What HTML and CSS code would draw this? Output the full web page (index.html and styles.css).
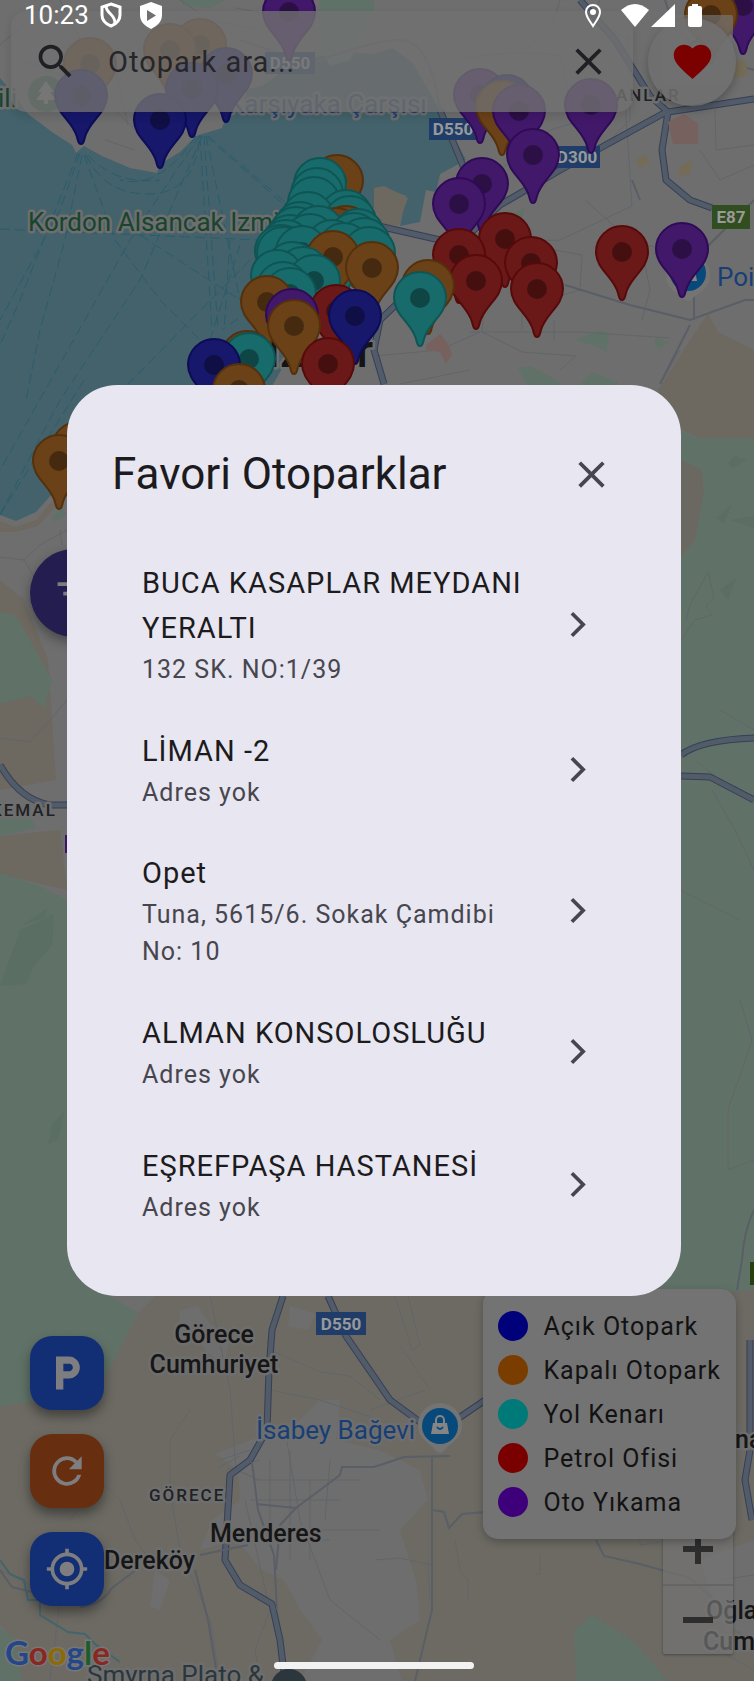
FILE: index.html
```
<!DOCTYPE html>
<html lang="tr">
<head>
<meta charset="utf-8">
<meta name="viewport" content="width=device-width, initial-scale=1">
<title>Favori Otoparklar</title>
<link rel="stylesheet" href="styles.css">
</head>
<body>
<div class="screen">
<svg class="map" viewBox="0 0 754 1681" preserveAspectRatio="xMidYMid slice" role="img" aria-label="İzmir haritası">
  <defs>
    <g id="pin"><path d="M0 48C-3 48-3 44-4 41C-8 25-26 17-26 0A26 26 0 0 1 26 0C26 17 8 25 4 41C3 44 3 48 0 48Z" stroke-width="2"/><circle r="10" stroke="none"/></g>
  </defs>
  <rect class="land" width="754" height="1681"/>
  <path class="water" d="M0 78L12 92L28 114L52 132L72 145L76 153L84 146L102 156L130 168L157 173L160 164L180 152L196 136L222 128L228 112L250 104L236 92L262 86L300 60L345 52L374 54L392 48L412 62L432 96L450 130L466 160L440 174L436 192L426 190L420 222L400 226L406 196L386 188L376 206L350 230L310 320L264 400L67 474L52 494L36 512L16 521L0 515Z"/>
  <path class="sand" d="M374 188L384 186L408 198L398 226L374 222ZM0 521L16 527L36 520L60 492L64 498L38 526L14 532L0 532ZM0 580L24 600L48 660L56 780L0 790ZM0 836L60 830L67 890L0 874ZM700 325L708 314L718 332L754 350V438H700L660 420L658 390Z"/>
  <path class="green" d="M180 0H225L210 8L185 6ZM320 0H374V14L350 60L330 66L318 44ZM574 340L600 330L610 334L606 352L596 346ZM655 338L670 342L660 348L655 346ZM518 368L530 366L560 382L556 390H530ZM580 384L592 372L618 382V390H580ZM50 518L62 506L66 514L56 522ZM0 612L16 616L30 640L52 680L44 708L30 696L0 704ZM0 800L24 806L36 828L0 836ZM0 873L40 886L67 900H100V1290L138 1313L104 1380L60 1398L0 1406ZM681 431L700 438H754V1290L660 1296H560V440ZM500 222L524 208L522 222Z"/>
  <path class="beige" d="M155 1296H660L754 1290V1681H22L14 1642L0 1624V1406L60 1398L104 1380L138 1313Z"/>
  <path class="green" d="M574 1630L592 1615L632 1640L668 1681H576ZM356 1470L368 1464L371 1470L364 1474ZM0 1628L16 1640L22 1681H0Z"/>
  <path class="land" d="M180 1310L198 1306L210 1324L230 1340L224 1364L206 1352L198 1338L178 1328ZM290 1306L316 1314L308 1330L288 1326ZM215 1454L250 1440L290 1430L320 1400L340 1400L336 1440L380 1450L420 1470L428 1500L400 1530L416 1580L420 1620L390 1640L402 1681H300L322 1640L300 1610L284 1580L262 1570L236 1540L200 1550L212 1520L240 1500L238 1470ZM155 1570L170 1580L160 1610L150 1606ZM700 1560L754 1540V1640L720 1620Z"/>
  <path class="hill" d="M681 460L702 470L704 492L695 540L681 556Z"/>
  <path class="shade" d="M20 930L54 914L52 946L34 966L26 984L0 986ZM22 925L48 908L44 918ZM734 456L748 460L732 468L728 464ZM716 518L732 504L724 524ZM730 520L754 516V528ZM720 590L736 578L728 600ZM52 1124L64 1112L58 1140L48 1144Z"/>
  <g class="ferry">
    <path d="M78 153L20 300L0 345M80 153L60 210L0 320M82 155L65 240L40 330L26 400M84 155L115 240L160 300L210 350M86 155Q105 195 150 194T200 135M88 155Q115 185 160 180M200 135L130 240L0 470M202 136L140 280L60 400L0 515M200 136L212 330M204 136L218 330M206 136L240 300M196 136Q160 190 120 180M206 136L290 210M208 136L300 215M0 229L260 240M140 235L240 300M250 260L128 384M84 380L0 515M240 245L210 340M230 240L224 330M250 310L222 330"/>
  </g>
  <g class="street">
    <path d="M0 45Q30 20 50 0M60 0L80 40L130 55L165 80M20 60L60 75L120 70M110 0L150 35L120 80M90 110L115 70L128 125M70 125L110 105L150 145M105 140L135 150M180 0L210 20L260 30M236 8L300 20M460 60Q490 50 560 55L570 100M600 0L590 20L630 40M560 0Q550 40 520 50M628 35L630 120L600 150M500 170L550 130L600 115M585 200L630 240L700 260M625 100L632 206L560 240L500 242M700 150L720 180L754 165M640 240L650 290L642 320M555 250L582 255L580 290L545 300M484 310L482 332L522 352L576 356L560 370M374 356L440 350L480 332M400 384L470 370M470 332L580 332L670 338M660 384L680 350M554 320V340M522 290V330M715 110L716 150L754 145M0 557L24 560L40 545L67 530M24 560L36 580M60 530L62 545M0 738L30 742L50 720L67 700M720 710L754 730M681 640L695 620L712 615L706 606L714 598L708 572L690 605L686 620M740 1000L752 1040L728 1110V1170L754 1160M695 760L720 780L754 800M712 790L735 830L754 870M640 870L700 900L740 920"/>
    <path d="M210 1296L230 1390L236 1470L260 1480M270 1350L320 1372L350 1376L380 1400M190 1410L170 1440V1490L180 1550L210 1620L220 1681M245 1500L270 1610L255 1650L260 1681M270 1390L320 1400L380 1420M285 1430L300 1520L330 1600L380 1640M310 1480V1560M255 1480H360M250 1500H340M270 1460V1540M290 1450V1560M330 1460L325 1520M265 1540H330M380 1530H320M220 1460L250 1450M226 1470L260 1460M218 1468L240 1456M70 1520L86 1500L100 1480L120 1500L135 1540L150 1560M0 1570L60 1600L50 1681M375 1560L400 1558L432 1565M425 1390L370 1410M430 1600L428 1560M455 1540L460 1570L468 1580V1600M540 1554V1574H536M400 1345L430 1390M640 1540V1545L660 1542M720 1580L754 1575M700 1640L754 1670M395 1296L412 1350L420 1345L408 1296"/>
  </g>
  <g class="road-casing"><path d="M580 0L615 40L650 96L668 112L662 150L666 180L690 200L712 208M668 112L754 99M374 225L440 240M666 112L560 170L500 205L380 320L374 350L384 384M440 110L475 195M0 765Q20 800 50 805H67M283 1296L272 1330L269 1370L267 1430L250 1460L230 1475L225 1560L240 1585L272 1604L280 1640L285 1681M328 1296L346 1336L390 1400L420 1422L450 1424L500 1390M681 755Q700 740 754 738M681 776L710 777L754 800M750 1340V1450L745 1480L752 1520"/></g>
  <g class="road"><path d="M580 0L615 40L650 96L668 112L662 150L666 180L690 200L712 208M668 112L754 99M374 225L440 240M666 112L560 170L500 205L380 320L374 350L384 384M440 110L475 195M0 765Q20 800 50 805H67M283 1296L272 1330L269 1370L267 1430L250 1460L230 1475L225 1560L240 1585L272 1604L280 1640L285 1681M328 1296L346 1336L390 1400L420 1422L450 1424L500 1390M681 755Q700 740 754 738M681 776L710 777L754 800M750 1340V1450L745 1480L752 1520"/></g>
  <path class="road-minor" d="M240 40L270 50L300 68Q370 40 400 40T440 110M565 285L630 305L690 320L745 300H754M694 320V260L754 200M660 384L690 325M665 0L675 30L720 60L754 70M632 180L640 200M200 1555L248 1545M195 1570L208 1620L218 1681M252 1462L258 1510L274 1555L277 1610M256 1504L296 1508L340 1475L342 1467H374L404 1457L450 1456M296 1508L280 1525L276 1570M432 1456V1510L444 1512L449 1528L462 1514L486 1512M432 1510V1610L415 1681M0 1570L12 1587L32 1592M80 1607Q100 1606 112 1588L136 1570M596 1540L604 1556L640 1564L690 1578L715 1600L754 1610"/>
  <path class="stream" d="M0 1560L10 1574L24 1580L28 1600L40 1600V1615L68 1632L85 1634L95 1644L120 1662"/>
  <path class="road-minor" d="M754 1210Q744 1230 742 1260L737 1290"/>
  <path class="clinic" d="M426 345L440 334L448 344L452 354L446 364L440 352L426 350ZM668 122L684 114L698 124V144H673Z"/>
  <path class="gold" d="M636 160L644 154L650 162L640 168ZM680 166L692 160L690 174L678 176ZM732 62L746 60L748 76L736 78Z"/>

  <g class="shield"><rect x="265" y="52" width="50" height="22"/><text x="290" y="69">D550</text></g>
  <g class="shield"><rect x="429" y="118" width="48" height="22"/><text x="453" y="135">D550</text></g>
  <g class="shield"><rect x="552" y="146" width="48" height="22"/><text x="577" y="163">D300</text></g>
  <g class="shield"><rect x="316" y="1312" width="50" height="23"/><text x="341" y="1330">D550</text></g>
  <g class="shield shield-green"><rect x="712" y="205" width="38" height="24"/><text x="731" y="223">E87</text></g>
  <rect class="edge-green" x="750" y="1262" width="4" height="23"/>
  <rect class="edge-purple" x="65" y="835" width="8" height="18"/>

  <g class="label">
    <text class="park" x="-2" y="107" font-size="26">ili</text>
    <text class="park" x="28" y="231" font-size="26">Kordon Alsancak Izmir</text>
    <text class="place" x="228" y="113" font-size="26">Karşıyaka Çarşısı</text>
    <text class="place" x="717" y="286" font-size="26">Poi</text>
    <text class="place" x="256" y="1439" font-size="26">İsabey Bağevi</text>
    <text class="district" x="616" y="101">ANLAR</text>
    <text class="district" x="-9" y="816">KEMAL</text>
    <text class="district" x="149" y="1501">GÖRECE</text>
    <text class="town" x="214" y="1343" text-anchor="middle">Görece</text>
    <text class="town" x="214" y="1373" text-anchor="middle">Cumhuriyet</text>
    <text class="town" x="210" y="1542">Menderes</text>
    <text class="town" x="104" y="1569">Dereköy</text>
    <text class="town" x="735" y="1448">na</text>
    <text class="town" x="706" y="1619">Oğla</text>
    <text class="town" x="703" y="1650">Cum</text>
    <text class="venue" x="87" y="1684" font-size="26">Smyrna Plato &amp;</text>
    <text class="city" x="320" y="367" text-anchor="middle">İzmir</text>
  </g>
  <circle class="venue-dot" cx="289" cy="1687" r="18"/>
  <g class="tree"><circle cx="46" cy="94" r="18"/><path d="M46 81L54 92H50L56 100H48V104H44V100H36L42 92H38Z"/></g>
  <g><path class="poi-rim" d="M440 1403A22 22 0 0 1 462 1425C462 1440 450 1442 444 1451Q440 1455 436 1451C430 1442 418 1440 418 1425A22 22 0 0 1 440 1403Z"/><circle class="poi" cx="440" cy="1426" r="18"/><path class="poi-icon" d="M433 1423H447L449 1434H431Z"/><path d="M436 1424V1420A4 4 0 0 1 444 1420V1424" fill="none" stroke="#858585" stroke-width="2"/><path d="M437 1427Q440 1431 443 1427" fill="none" stroke="#07497a" stroke-width="2"/></g>
  <g><path class="poi-rim" d="M688 253A22 22 0 0 1 710 275C710 290 698 292 692 299Q688 303 684 299C678 292 666 290 666 275A22 22 0 0 1 688 253Z"/><circle class="poi" cx="688" cy="273" r="18"/><path class="poi-icon" d="M681 270H695L697 281H679Z"/></g>

  <g class="pin-orange"><use href="#pin" x="90" y="64"/><use href="#pin" x="200" y="45"/><use href="#pin" x="170" y="50"/></g>
  <g class="pin-blue"><use href="#pin" x="226" y="74"/><use href="#pin" x="192" y="89"/><use href="#pin" x="81" y="96"/><use href="#pin" x="160" y="120"/></g>
  <g class="pin-purple"><use href="#pin" x="289" y="12"/><use href="#pin" x="743" y="6"/><use href="#pin" x="480" y="95"/></g>
  <g class="pin-blue"><use href="#pin" x="507" y="101"/></g>
  <g class="pin-orange"><use href="#pin" x="711" y="15"/><use href="#pin" x="502" y="107"/></g>
  <g class="pin-purple"><use href="#pin" x="591" y="105"/><use href="#pin" x="519" y="111"/><use href="#pin" x="482" y="184"/><use href="#pin" x="459" y="204"/><use href="#pin" x="533" y="155"/></g>
  <g class="pin-orange"><use href="#pin" x="337" y="181"/></g>
  <g class="pin-teal"><use href="#pin" x="320" y="184"/><use href="#pin" x="317" y="194"/><use href="#pin" x="314" y="203"/><use href="#pin" x="346" y="216"/><use href="#pin" x="308" y="218"/><use href="#pin" x="350" y="222"/><use href="#pin" x="300" y="228"/></g>
  <g class="pin-orange"><use href="#pin" x="346" y="232"/><use href="#pin" x="336" y="234"/></g>
  <g class="pin-teal"><use href="#pin" x="296" y="233"/><use href="#pin" x="318" y="232"/><use href="#pin" x="358" y="235"/><use href="#pin" x="354" y="239"/><use href="#pin" x="290" y="241"/><use href="#pin" x="310" y="240"/><use href="#pin" x="364" y="244"/><use href="#pin" x="286" y="246"/><use href="#pin" x="332" y="246"/><use href="#pin" x="344" y="249"/><use href="#pin" x="281" y="251"/><use href="#pin" x="369" y="253"/><use href="#pin" x="283" y="253"/><use href="#pin" x="302" y="252"/></g>
  <g class="pin-orange"><use href="#pin" x="333" y="257"/></g>
  <g class="pin-teal"><use href="#pin" x="292" y="268"/><use href="#pin" x="303" y="273"/><use href="#pin" x="277" y="276"/><use href="#pin" x="314" y="281"/><use href="#pin" x="283" y="288"/><use href="#pin" x="290" y="294"/></g>
  <g class="pin-orange"><use href="#pin" x="372" y="268"/><use href="#pin" x="267" y="302"/></g>
  <g class="pin-red"><use href="#pin" x="505" y="239"/><use href="#pin" x="622" y="252"/><use href="#pin" x="459" y="255"/><use href="#pin" x="531" y="263"/><use href="#pin" x="476" y="281"/><use href="#pin" x="537" y="289"/><use href="#pin" x="336" y="311"/></g>
  <g class="pin-purple"><use href="#pin" x="682" y="249"/><use href="#pin" x="292" y="315"/></g>
  <g class="pin-orange"><use href="#pin" x="428" y="286"/><use href="#pin" x="294" y="326"/></g>
  <g class="pin-teal"><use href="#pin" x="420" y="298"/></g>
  <g class="pin-blue"><use href="#pin" x="355" y="316"/></g>
  <g class="pin-orange"><use href="#pin" x="247" y="357"/></g>
  <g class="pin-teal"><use href="#pin" x="249" y="359"/></g>
  <g class="pin-red"><use href="#pin" x="328" y="364"/></g>
  <g class="pin-blue"><use href="#pin" x="214" y="365"/></g>
  <g class="pin-orange"><use href="#pin" x="239" y="390"/><use href="#pin" x="78" y="448"/><use href="#pin" x="59" y="461"/></g>

  <text class="google" x="5" y="1665"><tspan fill="#24478a">G</tspan><tspan fill="#8a2720">o</tspan><tspan fill="#8c6a06">o</tspan><tspan fill="#24478a">g</tspan><tspan fill="#1e5c2e">l</tspan><tspan fill="#8a2720">e</tspan></text>
</svg>

<button class="locate" type="button" aria-label="Konumum"><svg viewBox="0 0 48 48"><circle cx="24" cy="24" r="11"/><path d="M24 6v7M24 35v7M6 24h7M35 24h7"/></svg></button>
<div class="zoom">
  <button type="button" aria-label="Yakınlaştır"><svg viewBox="0 0 32 32"><path d="M16 1v30M1 16h30"/></svg></button>
  <button type="button" aria-label="Uzaklaştır"><svg viewBox="0 0 32 32"><path d="M1 16h30"/></svg></button>
</div>

<header class="topbar">
  <form class="search" role="search">
    <svg class="icon" viewBox="0 0 24 24" aria-hidden="true"><path d="M15.5 14h-.79l-.28-.27A6.47 6.47 0 0 0 16 9.500 6.500 6.500 0 1 0 9.500 16c1.610 0 3.090-.590 4.230-1.570l.27.280v.79l5 4.990L20.490 19zm-6 0C7.010 14 5 11.990 5 9.500S7.010 5 9.500 5 14 7.010 14 9.500 11.990 14 9.500 14"/></svg>
    <input type="text" placeholder="Otopark ara..." aria-label="Otopark ara">
    <button class="clear" type="reset" aria-label="Temizle"><svg class="icon" viewBox="0 0 24 24"><path d="M19 6.410 17.590 5 12 10.590 6.410 5 5 6.410 10.590 12 5 17.590 6.410 19 12 13.410 17.590 19 19 17.590 13.410 12z"/></svg></button>
  </form>
  <button class="heart" type="button" aria-label="Favoriler"><svg class="icon" viewBox="0 0 24 24"><path d="m12 21.350-1.450-1.320C5.400 15.360 2 12.280 2 8.500 2 5.420 4.420 3 7.500 3c1.740 0 3.410.81 4.500 2.090C13.090 3.810 14.760 3 16.500 3 19.580 3 22 5.420 22 8.500c0 3.780-3.400 6.860-8.550 11.540z"/></svg></button>
</header>

<div class="status">
  <time>10:23</time>
  <svg viewBox="0 0 24 28"><path d="M12 3l9 3v8c0 6-4 9-9 11-5-2-9-5-9-11V6z" fill="none" stroke="#fff" stroke-width="3"/><path d="M7 5c0 8 10 8 9 18" fill="none" stroke="#fff" stroke-width="3"/></svg>
  <svg class="spaced" viewBox="0 0 24 28"><path fill="#fff" fill-rule="evenodd" d="M12 1l11 4v9c0 7-5 11-11 14C6 25 1 21 1 14V5zM8 9v11l9-5.500z"/></svg>
  <span class="fill"></span>
  <svg viewBox="0 0 24 28"><path d="M12 4c-4 0-7 3-7 7 0 5 4 9 7 14 3-5 7-9 7-14 0-4-3-7-7-7z" fill="none" stroke="#fff" stroke-width="2"/><circle cx="12" cy="11" r="3" fill="#fff"/></svg>
  <svg class="wifi" viewBox="0 0 28 28"><path fill="#fff" d="M14 26L0 9Q14-3 28 9z"/></svg>
  <svg viewBox="0 0 24 28"><path fill="#fff" d="M24 3v23H0z"/></svg>
  <svg class="battery" viewBox="0 0 14 28"><path fill="#fff" d="M4 3h6v2h2q2 0 2 2v17q0 2-2 2H2q-2 0-2-2V7q0-2 2-2h2z"/></svg>
</div>

<button class="filter" type="button" aria-label="Filtrele"><svg class="icon" viewBox="0 0 24 24"><path d="M10 18h4v-2h-4zM3 6v2h18V6zm3 7h12v-2H6z"/></svg></button>

<nav class="tools" aria-label="Harita araçları">
  <button type="button" aria-label="Otopark"><svg class="icon" viewBox="0 0 24 24"><path d="M13 3H6v18h4v-6h3c3.310 0 6-2.690 6-6s-2.690-6-6-6m.2 8H10V7h3.200c1.100 0 2 .9 2 2s-.9 2-2 2"/></svg></button>
  <button class="refresh" type="button" aria-label="Yenile"><svg class="icon" viewBox="0 0 24 24"><path d="M17.650 6.350A7.960 7.960 0 0 0 12 4a8 8 0 1 0 7.730 10h-2.080A5.990 5.990 0 1 1 12 6c1.660 0 3.140.69 4.220 1.780L13 11h7V4z"/></svg></button>
  <button type="button" aria-label="Konumuma git"><svg class="icon" viewBox="0 0 24 24"><path d="M12 8a4 4 0 1 0 0 8 4 4 0 0 0 0-8m8.940 3A8.990 8.990 0 0 0 13 3.060V1h-2v2.060A8.990 8.990 0 0 0 3.060 11H1v2h2.060A8.990 8.990 0 0 0 11 20.940V23h2v-2.060A8.990 8.990 0 0 0 20.940 13H23v-2zM12 19a7 7 0 1 1 0-14 7 7 0 0 1 0 14"/></svg></button>
</nav>

<ul class="legend">
  <li><span class="dot open"></span>Açık Otopark</li>
  <li><span class="dot closed"></span>Kapalı Otopark</li>
  <li><span class="dot street-side"></span>Yol Kenarı</li>
  <li><span class="dot fuel"></span>Petrol Ofisi</li>
  <li><span class="dot wash"></span>Oto Yıkama</li>
</ul>

<main class="overlay">
  <section class="dialog" role="dialog" aria-labelledby="dialog-title">
    <div class="dialog-head">
      <h1 id="dialog-title">Favori Otoparklar</h1>
      <button class="close" type="button" aria-label="Kapat"><svg class="icon" viewBox="0 0 24 24"><path d="M19 6.410 17.590 5 12 10.590 6.410 5 5 6.410 10.590 12 5 17.590 6.410 19 12 13.410 17.590 19 19 17.590 13.410 12z"/></svg></button>
    </div>
    <ul class="places">
      <li><a href="#buca"><span class="text"><span class="name">BUCA KASAPLAR MEYDANI YERALTI</span><span class="address">132 SK. NO:1/39</span></span><svg class="icon chevron" viewBox="0 0 24 24"><path d="M9 6l6 6-6 6"/></svg></a></li>
      <li><a href="#liman"><span class="text"><span class="name">LİMAN -2</span><span class="address">Adres yok</span></span><svg class="icon chevron" viewBox="0 0 24 24"><path d="M9 6l6 6-6 6"/></svg></a></li>
      <li><a href="#opet"><span class="text"><span class="name">Opet</span><span class="address">Tuna, 5615/6. Sokak Çamdibi No: 10</span></span><svg class="icon chevron" viewBox="0 0 24 24"><path d="M9 6l6 6-6 6"/></svg></a></li>
      <li><a href="#alman"><span class="text"><span class="name">ALMAN KONSOLOSLUĞU</span><span class="address">Adres yok</span></span><svg class="icon chevron" viewBox="0 0 24 24"><path d="M9 6l6 6-6 6"/></svg></a></li>
      <li><a href="#esrefpasa"><span class="text"><span class="name">EŞREFPAŞA HASTANESİ</span><span class="address">Adres yok</span></span><svg class="icon chevron" viewBox="0 0 24 24"><path d="M9 6l6 6-6 6"/></svg></a></li>
    </ul>
  </section>
</main>
<span class="home-bar"></span>
</div>
</body>
</html>
```
FILE: styles.css
```
* { box-sizing: border-box; }
body { margin: 0; font-family: Roboto, "Noto Sans", sans-serif; background: #6e6e6e; }
button { border: 0; padding: 0; margin: 0; background: none; font: inherit; color: inherit; display: flex; align-items: center; justify-content: center; cursor: pointer; }
ul { list-style: none; margin: 0; padding: 0; }

.screen { position: relative; min-height: 100vh; overflow: hidden; display: flex; flex-direction: column; }
.icon { width: 45px; height: 45px; fill: currentColor; flex: none; display: block; }

/* Map */
.map { position: absolute; inset: 0; width: 100%; height: 100%; }
.land { fill: #6e6e6e; }
.water { fill: #43626b; }
.sand { fill: #6d6860; }
.beige { fill: #6c6a63; }
.green { fill: #607268; }
.hill { fill: #6b6862; }
.shade { fill: #5b6e63; }
.clinic { fill: #76615f; }
.gold { fill: #756c57; }
.ferry path { fill: none; stroke: #2b5c6b; stroke-width: 1; stroke-dasharray: 10 5; }
.street path { fill: none; stroke: #626569; stroke-width: 1; }
.road-casing path { fill: none; stroke: #363f58; stroke-width: 7; stroke-linejoin: round; }
.road path { fill: none; stroke: #525b68; stroke-width: 5; stroke-linejoin: round; }
.road-minor { fill: none; stroke: #5a5e66; stroke-width: 2; }
.stream { fill: none; stroke: #43666e; stroke-width: 2; }
.shield rect { fill: #1f3d68; }
.shield text { fill: #999; font-size: 17px; font-weight: 700; text-anchor: middle; }
.shield-green rect { fill: #314e20; }
.edge-green { fill: #28400f; }
.edge-purple { fill: #3b1763; }
.label text { paint-order: stroke; stroke: #6e6e6e; stroke-width: 5px; stroke-linejoin: round; }
.label .park { fill: #17452f; }
.label .place { fill: #173f76; }
.label .venue { fill: #2b373c; }
.label .town { fill: #161616; font-size: 25px; font-weight: 500; }
.label .district { fill: #202224; font-size: 17px; font-weight: 500; letter-spacing: 2px; }
.label .city { fill: #141414; font-size: 47px; font-weight: 500; }
.venue-dot { fill: #2b373c; }
.tree { fill: #335c49; }
.tree path { fill: #8a8a8a; }
.poi { fill: #07497a; }
.poi-rim { fill: #747474; }
.poi-icon { fill: #858585; }
.pin-orange { fill: #6b4118; stroke: #54300c; }
.pin-blue { fill: #17176b; stroke: #0c0c57; }
.pin-purple { fill: #42186b; stroke: #2f0b57; }
.pin-red { fill: #6b1818; stroke: #570a0a; }
.pin-teal { fill: #186b6b; stroke: #0f5555; }
#pin circle { fill: #000; fill-opacity: .35; }
.google { font-family: Lato, sans-serif; font-size: 33px; font-weight: 700; paint-order: stroke; stroke: #777; stroke-width: 3px; }

/* Map controls */
.locate { position: absolute; top: 15px; right: 21px; width: 70px; height: 70px; background: rgba(115, 115, 115, .7); border-radius: 2px; }
.locate svg { width: 40px; fill: none; stroke: #5a5a5a; stroke-width: 3; }
.zoom { position: absolute; right: 21px; bottom: 27px; width: 70px; background: rgba(115, 115, 115, .7); border-radius: 2px; box-shadow: 0 1px 3px rgba(0, 0, 0, .35); }
.zoom button { width: 100%; height: 70px; }
.zoom button + button { border-top: 2px solid #656565; }
.zoom svg { width: 32px; fill: none; stroke: #2d2d2d; stroke-width: 6; }

/* Top bar */
.topbar { position: relative; display: flex; align-items: center; gap: 15px; padding: 11px 18px 0 11px; }
.search { flex: 1; min-width: 0; display: flex; align-items: center; height: 101px; padding: 0 22px; color: #202024; background: rgba(112, 112, 112, .8); border-radius: 15px; box-shadow: 0 4px 10px rgba(0, 0, 0, .12); }
.search input { flex: 1; min-width: 0; margin-left: 30px; padding: 0; border: 0; outline: 0; background: none; font: inherit; font-size: 29px; letter-spacing: 1px; color: inherit; }
.search input::placeholder { color: #26262a; opacity: 1; }
.heart { width: 88px; height: 88px; flex: none; border-radius: 50%; color: #7b0000; background: rgba(112, 112, 112, .85); box-shadow: 0 4px 8px rgba(0, 0, 0, .25); }

.status { position: absolute; top: 0; left: 0; right: 0; display: flex; align-items: center; height: 30px; padding: 0 52px 0 24px; color: #fff; font-size: 26px; }
.status svg { width: 24px; height: 28px; margin-left: 10px; flex: none; }
.status .spaced { margin-left: 16px; }
.status .fill { flex: 1; }
.status .wifi { width: 28px; margin-left: 16px; }
.status .wifi + svg { margin-left: 2px; }
.status .battery { width: 14px; margin-left: 13px; }

/* Floating buttons */
.filter { position: absolute; top: 549px; left: 30px; width: 88px; height: 88px; border-radius: 50%; color: #7c7c80; background: #241d50; box-shadow: 0 5px 12px rgba(0, 0, 0, .35); }
.tools { position: absolute; left: 30px; bottom: 75px; display: flex; flex-direction: column; gap: 24px; }
.tools button { width: 74px; height: 74px; border-radius: 22px; color: #7e7e80; background: #122f76; box-shadow: 0 6px 12px rgba(0, 0, 0, .4); }
.tools .refresh { background: #672e10; }
.tools svg { width: 44px; height: 44px; }

/* Legend */
.legend { position: absolute; right: 18px; bottom: 142px; padding: 15px; background: #737373; border-radius: 15px; box-shadow: 0 3px 8px rgba(0, 0, 0, .25); color: #121212; font-size: 25px; letter-spacing: 1px; }
.legend li { display: flex; align-items: center; gap: 15px; height: 44px; }
.dot { width: 30px; height: 30px; border-radius: 50%; }
.open { background: #00007a; }
.closed { background: #7a3d00; }
.street-side { background: #007a78; }
.fuel { background: #7a0000; }
.wash { background: #3d007a; }

/* Dialog */
.overlay { position: absolute; inset: 0; display: flex; align-items: center; padding: 0 73px 0 67px; }
.dialog { flex: 1; min-width: 0; padding: 45px; border-radius: 50px; background: #e8e6f0; color: #1b1b20; }
.dialog-head { display: flex; align-items: center; justify-content: space-between; height: 88px; margin-bottom: 28px; }
.dialog-head h1 { margin: 0; font-size: 44px; font-weight: 400; line-height: 60px; }
.close { width: 90px; height: 88px; color: #47464f; }
.places a { display: flex; align-items: center; gap: 15px; min-height: 133px; padding: 15px 36px 15px 30px; color: inherit; text-decoration: none; }
.places .icon { color: #47464f; }
.places .chevron { fill: none; stroke: currentColor; stroke-width: 2; }
.text { flex: 1; min-width: 0; }
.name, .address { display: block; letter-spacing: 1px; }
.name { font-size: 29px; line-height: 45px; }
.address { font-size: 25px; line-height: 37px; color: #47464f; }

.home-bar { position: absolute; left: 274px; right: 280px; bottom: 12px; height: 7px; border-radius: 4px; background: #f2f2f2; }
```
